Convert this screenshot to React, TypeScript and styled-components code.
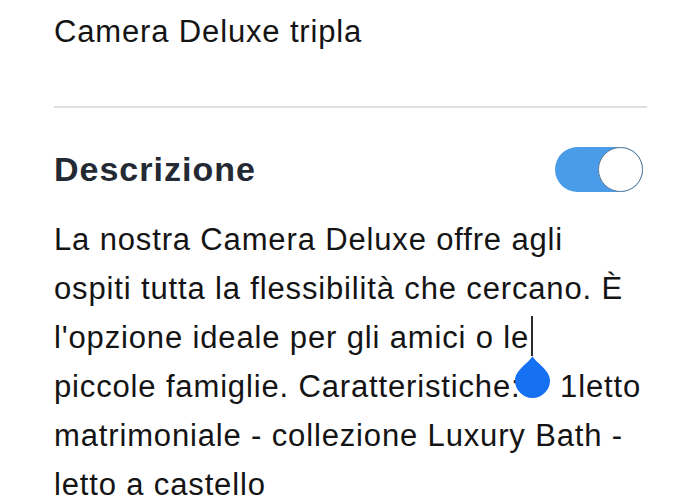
import React from "react";
import styled, { createGlobalStyle } from "styled-components";

const Global = createGlobalStyle`
  html, body { margin: 0; padding: 0; background: #ffffff; }
  body { font-family: "Liberation Sans", Arial, sans-serif; overflow: hidden; }
`;

const Page = styled.div`
  width: 700px;
  height: 500px;
  box-sizing: border-box;
  padding: 14px 53px 0 54px;
  display: flex;
  flex-direction: column;
  overflow: hidden;
`;

const Title = styled.div`
  font-size: 31px;
  line-height: 36px;
  color: #141414;
  letter-spacing: 0.85px;
`;

const Divider = styled.div`
  align-self: stretch;
  height: 2px;
  flex: 0 0 2px;
  background: #dfdfdf;
  margin-top: 56px;
`;

const HeaderRow = styled.div`
  display: flex;
  align-items: center;
  justify-content: space-between;
  margin-top: 39px;
  height: 45px;
  flex: 0 0 45px;
`;

const Heading = styled.div`
  font-size: 34px;
  line-height: 45px;
  font-weight: 700;
  color: #232a33;
  letter-spacing: 1px;
`;

const Toggle = styled.div`
  width: 88px;
  height: 45px;
  border-radius: 23px;
  background: #4a9be8;
  display: flex;
  align-items: center;
  justify-content: flex-end;
  margin-right: 4px;
`;

const Knob = styled.div`
  width: 45px;
  height: 45px;
  box-sizing: border-box;
  border-radius: 50%;
  background: #ffffff;
  border: 1.5px solid #5e7d97;
`;

const Body = styled.div`
  margin-top: 23px;
  font-size: 31px;
  line-height: 49px;
  color: #141414;
  letter-spacing: 0.85px;
  flex: 0 0 auto;
`;

const Line = styled.div`
  white-space: nowrap;
`;

const CaretAnchor = styled.span`
  position: relative;
  display: inline-block;
  width: 0;
  height: 31px;
  margin-left: 3px;
`;

const CaretBar = styled.span`
  position: absolute;
  left: -1px;
  top: -1px;
  width: 2px;
  height: 40px;
  background: #2a2a2a;
`;

const Handle = styled.svg`
  position: absolute;
  left: -17.5px;
  top: 39px;
  width: 35px;
  height: 42px;
`;

export default function App() {
  return (
    <>
      <Global />
      <Page>
        <Title>Camera Deluxe tripla</Title>
        <Divider />
        <HeaderRow>
          <Heading>Descrizione</Heading>
          <Toggle>
            <Knob />
          </Toggle>
        </HeaderRow>
        <Body>
          <Line>La nostra Camera Deluxe offre agli</Line>
          <Line>ospiti tutta la flessibilità che cercano. È</Line>
          <Line>
            l'opzione ideale per gli amici o le
            <CaretAnchor>
              <CaretBar />
              <Handle viewBox="0 0 35 42">
                <path
                  d="M17.5 0 C20 6 35 14 35 24.5 A17.5 17.5 0 0 1 0 24.5 C0 14 15 6 17.5 0 Z"
                  fill="#1570f2"
                />
              </Handle>
            </CaretAnchor>
          </Line>
          <Line>piccole famiglie. Caratteristiche: -{"\u00a0"} 1letto</Line>
          <Line>matrimoniale - collezione Luxury Bath -</Line>
          <Line>letto a castello</Line>
        </Body>
      </Page>
    </>
  );
}
